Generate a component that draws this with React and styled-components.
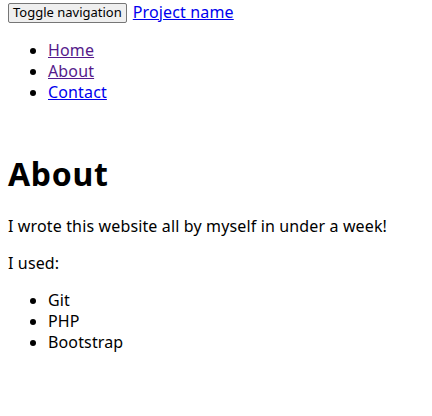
import React from 'react'
import styled, { createGlobalStyle } from 'styled-components'

const GlobalStyle = createGlobalStyle`
  body {
    margin: 0;
    padding: 0 8px;
    font-family: "Noto Sans", "Open Sans", sans-serif;
    font-size: 16px;
    line-height: 21px;
    letter-spacing: 0.14px;
    color: #000;
    background: #fff;
  }
`

const Navbar = styled.nav`
  display: block;
`

const Header = styled.div`
  display: flex;
  align-items: center;
  gap: 6px;
  height: 24px;
`

const ToggleButton = styled.button`
  font-family: "Noto Sans", sans-serif;
  font-size: 13px;
  letter-spacing: 0;
  line-height: 15px;
  padding: 1px 4px;
  height: 20px;
  margin-top: 1px;
  color: #000;
  background: #efefef;
  border: 1px solid #767676;
  border-radius: 2px;
`

const Link = styled.a`
  color: ${p => (p.$visited ? '#551a8b' : '#0000ee')};
  text-decoration: underline;
  cursor: pointer;
`

const BrandLink = styled(Link)`
  font-size: 16px;
`

const List = styled.ul`
  margin: 16px 0;
  padding-left: 40px;
  list-style: disc;
`

const Main = styled.main`
  padding-top: 13px;
`

const Title = styled.h1`
  font-size: 32px;
  line-height: 42px;
  font-weight: 700;
  letter-spacing: 0.7px;
  margin: 21px 0;
`

const Text = styled.p`
  margin: 16px 0;
`

const App = () => {
  return (
    <>
      <GlobalStyle />
      <Navbar>
        <Header>
          <ToggleButton type="button">Toggle navigation</ToggleButton>
          <BrandLink href="#">Project name</BrandLink>
        </Header>
        <List>
          <li><Link $visited href="#">Home</Link></li>
          <li><Link $visited href="#">About</Link></li>
          <li><Link href="#">Contact</Link></li>
        </List>
      </Navbar>
      <Main>
        <Title>About</Title>
        <Text>I wrote this website all by myself in under a week!</Text>
        <Text>I used:</Text>
        <List>
          <li>Git</li>
          <li>PHP</li>
          <li>Bootstrap</li>
        </List>
      </Main>
    </>
  )
}

export default App
